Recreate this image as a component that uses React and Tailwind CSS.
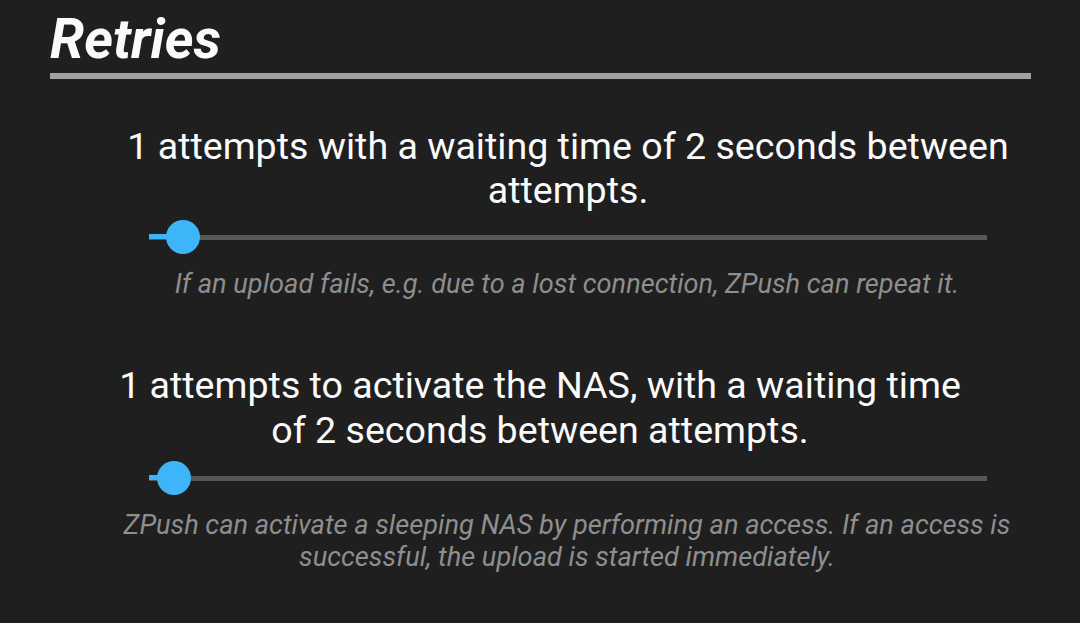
import React from 'react';

const font = { fontFamily: 'Roboto, "Liberation Sans", sans-serif' };

// Slider simples: trilho, preenchimento e bolinha
function Slider({ thumb }) {
  return (
    <div className="relative ml-[149px] w-[838px] h-[34px] flex items-center">
      <div className="w-full h-[5px] bg-[#575757]" />
      <div className="absolute left-0 top-[14px] h-[5px] bg-[#3db5f8]" style={{ width: thumb }} />
      <div
        className="absolute top-0 w-[34px] h-[34px] rounded-full bg-[#3db5f8]"
        style={{ left: thumb - 17 }}
      />
    </div>
  );
}

export default function App() {
  return (
    <div className="w-[1080px] h-[623px] bg-[#1f1f1f] overflow-hidden text-white" style={font}>
      {/* Título */}
      <div className="pl-[50px] pt-[8px]">
        <h1 className="text-[55px] leading-[62px] font-bold italic text-[#fafafa]">Retries</h1>
        <div className="mt-[3px] w-[981px] h-[6px] bg-[#a0a0a0]" />
      </div>

      {/* Tentativas de upload */}
      <div className="mt-[45px] text-center text-[37.6px] leading-[44px] text-[#fafafa] ml-[56px]">
        1 attempts with a waiting time of 2 seconds between
        <br />
        attempts.
      </div>
      <div className="mt-[8px]">
        <Slider thumb={34} />
      </div>
      <div className="mt-[14px] text-center text-[27.2px] leading-[32px] italic text-[#8e8e8e] ml-[54px]">
        If an upload fails, e.g. due to a lost connection, ZPush can repeat it.
      </div>

      {/* Ativação do NAS */}
      <div className="mt-[63px] text-center text-[37.6px] leading-[45px] text-[#fafafa]">
        1 attempts to activate the NAS, with a waiting time
        <br />
        of 2 seconds between attempts.
      </div>
      <div className="mt-[8px]">
        <Slider thumb={25} />
      </div>
      <div className="mt-[14px] text-center text-[27.2px] leading-[32px] italic text-[#8e8e8e] ml-[54px]">
        ZPush can activate a sleeping NAS by performing an access. If an access is
        <br />
        successful, the upload is started immediately.
      </div>
    </div>
  );
}
